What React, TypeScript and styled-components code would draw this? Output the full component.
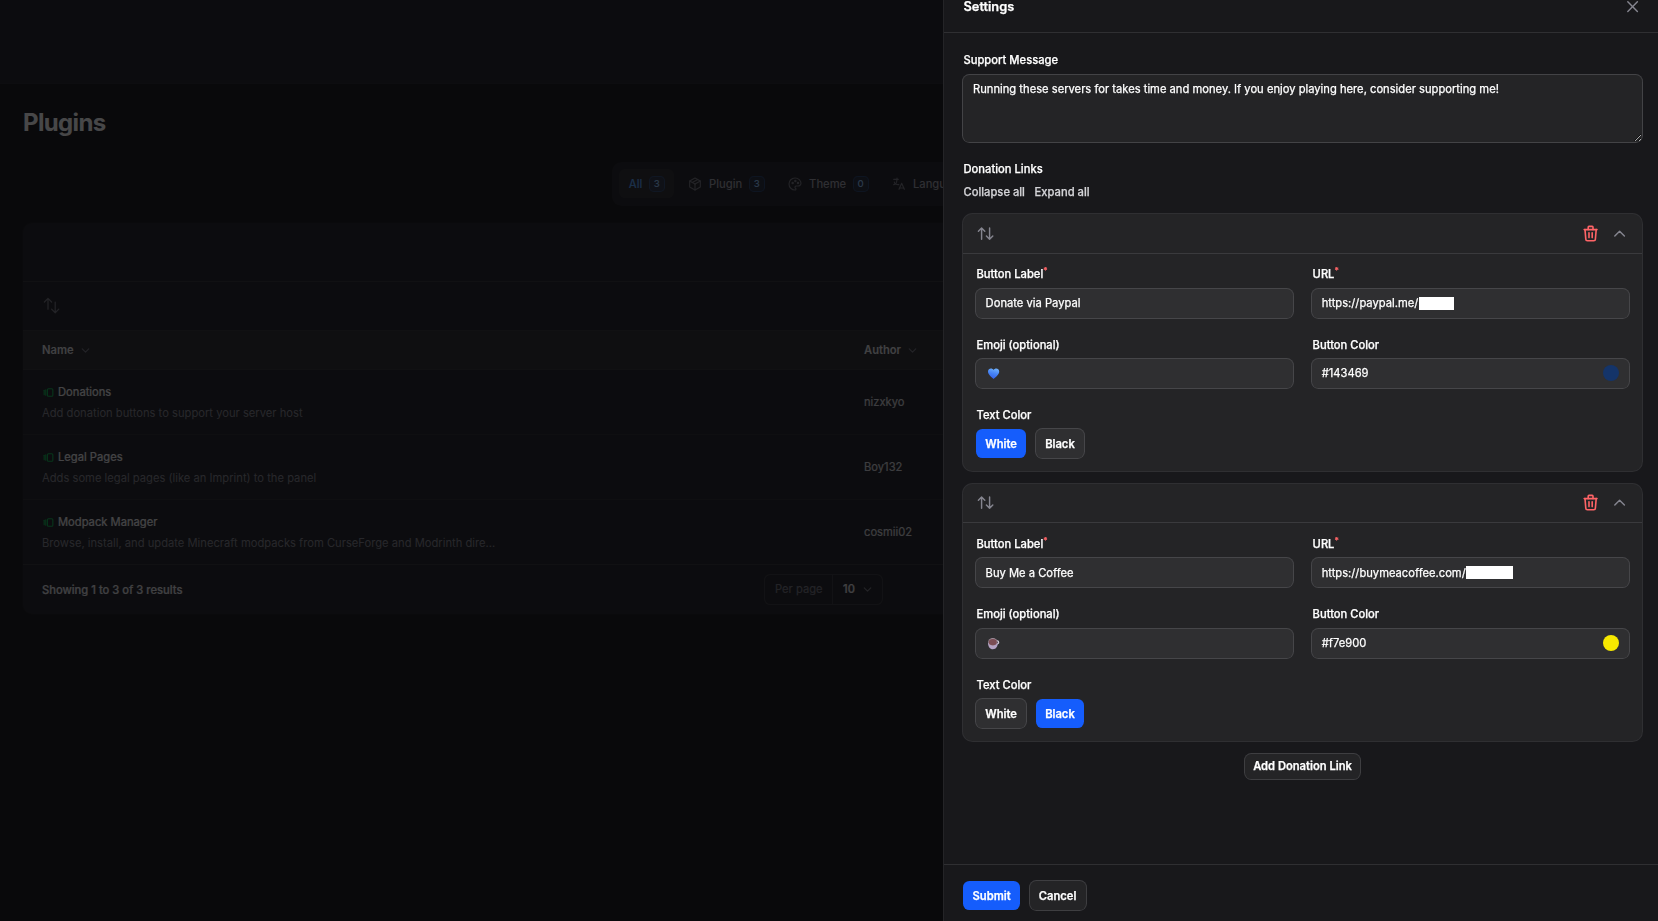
import React from "react";
import styled, { createGlobalStyle } from "styled-components";
import {
  TbArrowsSort,
  TbChevronDown,
  TbChevronUp,
  TbLanguage,
  TbPackage,
  TbPalette,
  TbTrash,
  TbVersions,
  TbX,
} from "react-icons/tb";

const GlobalStyle = createGlobalStyle`
  *, *::before, *::after { box-sizing: border-box; }
  html, body { margin: 0; padding: 0; height: 100%; }
  body {
    background: #09090b;
    color: #fff;
    font-family: Inter, "Liberation Sans", sans-serif;
    font-size: 11.2px;
    line-height: 16px;
    overflow: hidden;
  }
  button, input, textarea { font: inherit; color: inherit; margin: 0; }
  svg { display: block; flex: none; }
`;

/* ---------- Page behind the drawer ---------- */

const Page = styled.div`
  height: 921px;
  width: 100%;
  opacity: 0.25;
  overflow: hidden;
`;

const Topbar = styled.div`
  height: 84px;
  background: #18181b;
  border-bottom: 1px solid #1c1c1f;
`;

const Main = styled.main`
  display: flex;
  flex-direction: column;
  padding: 0 23px;
`;

const Title = styled.h1`
  margin: 23px 0 0;
  font-size: 24px;
  line-height: 32px;
  font-weight: 700;
  letter-spacing: -0.65px;
`;

const Tabs = styled.nav`
  align-self: center;
  display: flex;
  gap: 3.2px;
  width: 434px;
  height: 44px;
  margin-top: 23px;
  padding: 7.4px;
  border-radius: 9.6px;
  background: #18181b;
`;

const Tab = styled.div<{ $active?: boolean }>`
  display: flex;
  align-items: center;
  gap: 6.4px;
  height: 28.8px;
  padding: 0 9.4px;
  border-radius: 6.4px;
  font-weight: 500;
  color: ${(p) => (p.$active ? "#51a2ff" : "#9f9fa9")};
  background: ${(p) => (p.$active ? "rgba(255,255,255,0.05)" : "transparent")};
  svg { color: #71717b; }
`;

const Badge = styled.span`
  display: grid;
  place-items: center;
  width: 16px;
  height: 16px;
  border-radius: 4.8px;
  background: rgba(43, 127, 255, 0.1);
  box-shadow: inset 0 0 0 1px rgba(43, 127, 255, 0.25);
  color: #8ec5ff;
  font-size: 9.6px;
  line-height: 16px;
`;

const Table = styled.section`
  margin-top: 17px;
  height: 391px;
  border-radius: 9.6px;
  background: #18181b;
  box-shadow: 0 0 0 1px rgba(255, 255, 255, 0.03);
`;

const Toolbar = styled.div<{ $height: number }>`
  display: flex;
  align-items: center;
  height: ${(p) => p.$height}px;
  padding-left: 19px;
  border-bottom: 1px solid #29292c;
`;

const Columns = styled.div<{ $head?: boolean; $last?: boolean }>`
  display: grid;
  grid-template-columns: 822px 1fr;
  align-items: center;
  height: ${(p) => (p.$head ? 39 : 65)}px;
  padding-left: 19px;
  background: ${(p) => (p.$head ? "#242426" : "transparent")};
  border-bottom: 1px solid ${(p) => (p.$head || p.$last ? "#29292c" : "#222225")};
`;

const HeadCell = styled.div`
  display: flex;
  align-items: center;
  gap: 5px;
  font-weight: 600;
  color: #e4e4e7;
  svg { color: #71717b; }
`;

const PluginCell = styled.div`
  display: flex;
  flex-direction: column;
  gap: 5px;
`;

const PluginName = styled.div`
  display: flex;
  align-items: center;
  gap: 3px;
  color: #f4f4f5;
  -webkit-text-stroke: 0.2px;
  svg { color: #00b84a; margin-top: 2px; }
`;

const Description = styled.div`
  color: #82828c;
`;

const Author = styled.div`
  color: #d8d8dc;
  -webkit-text-stroke: 0.2px;
`;

const Pagination = styled.footer`
  display: grid;
  grid-template-columns: 722px auto;
  justify-content: start;
  align-items: center;
  height: 49px;
  padding-left: 19px;
  font-weight: 500;
  color: #e4e4e7;
  -webkit-text-stroke: 0.2px;
`;

const PerPage = styled.div`
  display: flex;
  width: 119px;
  height: 31px;
  border-radius: 6.4px;
  box-shadow: inset 0 0 0 1px #303034;
  line-height: 31px;
`;

const PerPageLabel = styled.span`
  width: 69px;
  padding-left: 11px;
  border-right: 1px solid #303034;
  color: #71717b;
  font-weight: 400;
`;

const PerPageValue = styled.span`
  flex: 1;
  display: flex;
  align-items: center;
  justify-content: space-between;
  padding: 0 9px 0 10px;
  svg { color: #71717b; }
`;

/* ---------- Settings drawer ---------- */

const Drawer = styled.aside`
  position: fixed;
  top: 0;
  right: 0;
  width: 715px;
  height: 921px;
  display: flex;
  flex-direction: column;
  background: #18181b;
  border-left: 1px solid #242427;
  -webkit-text-stroke: 0.25px;
`;

const DrawerHeader = styled.header`
  display: flex;
  justify-content: space-between;
  align-items: flex-start;
  height: 33px;
  padding: 0 16px 0 19.5px;
  border-bottom: 1px solid #2f2f32;
`;

const DrawerTitle = styled.h2`
  margin: 0;
  font-size: 12.8px;
  line-height: 13px;
  font-weight: 600;
`;

const CloseButton = styled.button`
  display: flex;
  align-items: center;
  justify-content: center;
  width: 19px;
  height: 13px;
  padding: 0;
  border: 0;
  background: none;
  color: #85858f;
`;

const DrawerBody = styled.div`
  flex: 1;
  display: flex;
  flex-direction: column;
  gap: 19.2px;
  padding: 19.2px 16px 0 19px;
`;

const Field = styled.div`
  display: flex;
  flex-direction: column;
  gap: 6.4px;
  min-width: 0;
`;

const Label = styled.label`
  height: 16px;
  padding-left: 0.5px;
  font-weight: 500;
  white-space: nowrap;
  sup {
    color: #ff6467;
    font-size: 8.4px;
    line-height: 0;
    position: relative;
    top: 0.8px;
    vertical-align: super;
  }
`;

const Message = styled.textarea`
  display: block;
  width: 100%;
  height: 67.4px;
  padding: 6px 10px;
  border: 0;
  outline: 0;
  border-radius: 6.4px;
  background: #242426;
  box-shadow: 0 0 0 1px #434346;
  line-height: 16px;
  color: #fff;
  resize: vertical;
  color-scheme: dark;
`;

const ExpandActions = styled.div`
  display: flex;
  gap: 9.6px;
  height: 16px;
  padding-left: 0.5px;
  font-weight: 500;
  color: #d4d4d8;
`;

const Repeater = styled.div`
  display: flex;
  flex-direction: column;
  align-items: center;
  gap: 12.8px;
  margin-top: 8.2px;
`;

const Item = styled.section`
  width: 100%;
  border-radius: 9.6px;
  background: #242426;
  box-shadow: 0 0 0 1px #2f2f32;
`;

const ItemHeader = styled.header`
  display: flex;
  align-items: center;
  gap: 10px;
  height: 39.4px;
  padding: 0 13px;
  border-bottom: 1px solid #3a3a3d;
  color: #85858f;
`;

const Spacer = styled.span`
  flex: 1;
`;

const Danger = styled.span`
  color: #ff6467;
`;

const ItemBody = styled.div`
  display: grid;
  grid-template-columns: 1fr 1fr;
  gap: 19.2px;
  padding: 12.8px 13px;
`;

const Control = styled.div`
  display: flex;
  align-items: center;
  height: 28.8px;
  padding: 0 9.6px;
  border-radius: 6.4px;
  background: #2f2f31;
  box-shadow: 0 0 0 1px #464649;
`;

const Redaction = styled.span<{ $width: number }>`
  width: ${(p) => p.$width}px;
  height: 13px;
  margin-left: 0.3px;
  background: #fff;
`;

const Swatch = styled.span<{ $color: string }>`
  width: 16px;
  height: 16px;
  margin-left: auto;
  border-radius: 50%;
  background: ${(p) => p.$color};
`;

const Buttons = styled.div`
  display: flex;
  gap: 9.6px;
`;

const Button = styled.button<{ $primary?: boolean; $small?: boolean; $raised?: boolean }>`
  height: ${(p) => (p.$small ? 25.6 : 28.8)}px;
  padding: 0 ${(p) => (p.$small ? 7.7 : 9.3)}px;
  border: 0;
  border-radius: 6.4px;
  font-weight: 600;
  line-height: 16px;
  white-space: nowrap;
  background: ${(p) => (p.$primary ? "#155dfc" : p.$raised ? "#2f2f31" : "#242426")};
  box-shadow: ${(p) => (p.$primary ? "none" : `0 0 0 1px ${p.$raised ? "#464649" : "#3e3e41"}`)};
`;

const DrawerFooter = styled.footer`
  display: flex;
  gap: 9.6px;
  height: 57px;
  padding: 16.2px 19.3px;
  border-top: 1px solid #2f2f32;
`;

/* ---------- Icons ---------- */

const ReorderIcon = () => (
  <svg width="19.2" height="19.2" viewBox="0 0 24 24" fill="none" stroke="#71717b" strokeWidth="1.5" strokeLinecap="round" strokeLinejoin="round">
    <path d="M3 7.5 7.5 3m0 0L12 7.5M7.5 3v13.5m13.5 0L16.5 21m0 0L12 16.5m4.5 4.5V7.5" />
  </svg>
);

const HeartIcon = () => (
  <svg width="15" height="13" viewBox="0 0 15 13">
    <defs>
      <linearGradient id="heart" x1="0.7" y1="0" x2="0.4" y2="1">
        <stop offset="0" stopColor="#6fb0fb" />
        <stop offset="0.5" stopColor="#4583f5" />
        <stop offset="1" stopColor="#3560e8" />
      </linearGradient>
    </defs>
    <path d="M7.6 3C6.4 .8 2 .9 2 4.600c0 3.200 3.700 5.800 5.600 7.300 1.900-1.500 5.600-4.100 5.600-7.300C13.200.9 8.800.8 7.600 3Z" fill="url(#heart)" />
  </svg>
);

const TeaIcon = () => (
  <svg width="15" height="13" viewBox="0 0 15 13">
    <circle cx="11.200" cy="5.400" r="1.500" fill="none" stroke="#d6cfdc" strokeWidth="1.100" />
    <path d="M2 5.800c0 3.800 1.800 6.500 4.900 6.500s4.900-2.900 4.900-6.500Z" fill="#b5a3c4" />
    <ellipse cx="6.800" cy="4.900" rx="4.600" ry="3.800" fill="#a08f9c" />
    <ellipse cx="6.800" cy="5.100" rx="4" ry="3.200" fill="#7b4d54" />
  </svg>
);

/* ---------- Data ---------- */

const plugins = [
  { name: "Donations", description: "Add donation buttons to support your server host", author: "nizxkyo" },
  { name: "Legal Pages", description: "Adds some legal pages (like an Imprint) to the panel", author: "Boy132" },
  {
    name: "Modpack Manager",
    description: "Browse, install, and update Minecraft modpacks from CurseForge and Modrinth dire...",
    author: "cosmii02",
  },
];

const links = [
  { label: "Donate via Paypal", url: "https://paypal.me/", hidden: 35, emoji: <HeartIcon />, color: "#143469", text: "White" },
  { label: "Buy Me a Coffee", url: "https://buymeacoffee.com/", hidden: 47, emoji: <TeaIcon />, color: "#f7e900", text: "Black" },
];

export default function App() {
  return (
    <>
      <GlobalStyle />
      <Page>
        <Topbar />
        <Main>
          <Title>Plugins</Title>
          <Tabs>
            <Tab $active>All<Badge>3</Badge></Tab>
            <Tab><TbPackage size={16} strokeWidth={1.7} />Plugin<Badge>3</Badge></Tab>
            <Tab><TbPalette size={16} strokeWidth={1.7} />Theme<Badge>0</Badge></Tab>
            <Tab><TbLanguage size={16} strokeWidth={1.7} />Language</Tab>
          </Tabs>
          <Table>
            <Toolbar $height={59} />
            <Toolbar $height={49}><ReorderIcon /></Toolbar>
            <Columns $head>
              <HeadCell>Name<TbChevronDown size={13} /></HeadCell>
              <HeadCell>Author<TbChevronDown size={13} /></HeadCell>
            </Columns>
            {plugins.map((p, i) => (
              <Columns key={p.name} $last={i === plugins.length - 1}>
                <PluginCell>
                  <PluginName><TbVersions size={13} />{p.name}</PluginName>
                  <Description>{p.description}</Description>
                </PluginCell>
                <Author>{p.author}</Author>
              </Columns>
            ))}
            <Pagination>
              <span>Showing 1 to 3 of 3 results</span>
              <PerPage>
                <PerPageLabel>Per page</PerPageLabel>
                <PerPageValue>10<TbChevronDown size={13} /></PerPageValue>
              </PerPage>
            </Pagination>
          </Table>
        </Main>
      </Page>

      <Drawer>
        <DrawerHeader>
          <DrawerTitle>Settings</DrawerTitle>
          <CloseButton aria-label="Close"><TbX size={19.2} strokeWidth={1.8} /></CloseButton>
        </DrawerHeader>
        <DrawerBody>
          <Field>
            <Label>Support Message</Label>
            <Message
              spellCheck={false}
              defaultValue="Running these servers for takes time and money. If you enjoy playing here, consider supporting me!"
            />
          </Field>
          <Field>
            <Label>Donation Links</Label>
            <ExpandActions><span>Collapse all</span><span>Expand all</span></ExpandActions>
            <Repeater>
              {links.map((link) => (
                <Item key={link.label}>
                  <ItemHeader>
                    <TbArrowsSort size={19.2} strokeWidth={1.8} />
                    <Spacer />
                    <Danger><TbTrash size={19.2} /></Danger>
                    <TbChevronUp size={19.2} strokeWidth={1.8} />
                  </ItemHeader>
                  <ItemBody>
                    <Field>
                      <Label>Button Label<sup>*</sup></Label>
                      <Control>{link.label}</Control>
                    </Field>
                    <Field>
                      <Label>URL<sup>*</sup></Label>
                      <Control>{link.url}<Redaction $width={link.hidden} /></Control>
                    </Field>
                    <Field>
                      <Label>Emoji (optional)</Label>
                      <Control>{link.emoji}</Control>
                    </Field>
                    <Field>
                      <Label>Button Color</Label>
                      <Control>{link.color}<Swatch $color={link.color} /></Control>
                    </Field>
                    <Field>
                      <Label>Text Color</Label>
                      <Buttons>
                        {["White", "Black"].map((t) => (
                          <Button key={t} $primary={t === link.text} $raised>{t}</Button>
                        ))}
                      </Buttons>
                    </Field>
                  </ItemBody>
                </Item>
              ))}
              <Button $small>Add Donation Link</Button>
            </Repeater>
          </Field>
        </DrawerBody>
        <DrawerFooter>
          <Button $primary>Submit</Button>
          <Button>Cancel</Button>
        </DrawerFooter>
      </Drawer>
    </>
  );
}
